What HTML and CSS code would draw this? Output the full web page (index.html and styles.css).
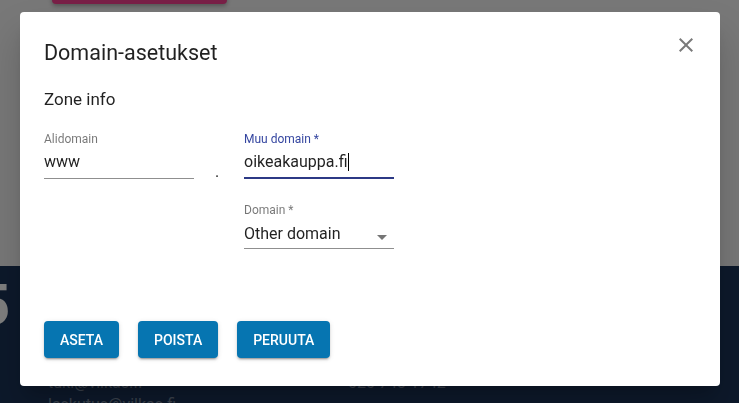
FILE: index.html
```html
<!DOCTYPE html>
<html lang="fi">
<head>
  <meta charset="UTF-8" />
  <meta name="viewport" content="width=device-width, initial-scale=1.0" />
  <title>Domain-asetukset</title>
  <link rel="stylesheet" href="styles.css">
</head>
<body>
  <div class="page">
    <div class="page-top">
      <div class="pink-button"></div>
    </div>
    <div class="footer">
      <div class="footer-logo">5</div>
      <div class="footer-cols">
        <div class="footer-col">
          <p>tuki@vilkas.fi</p>
          <p>laskutus@vilkas.fi</p>
        </div>
        <div class="footer-col">
          <p>020 743 1742</p>
        </div>
      </div>
    </div>
  </div>

  <div class="scrim"></div>

  <div class="dialog">
    <div class="dialog-header">
      <h2 class="dialog-title">Domain-asetukset</h2>
      <button class="close-btn" aria-label="Sulje">
        <svg viewBox="0 0 24 24" width="24" height="24"><path d="M19 6.41L17.59 5 12 10.59 6.41 5 5 6.41 10.59 12 5 17.59 6.41 19 12 13.41 17.59 19 19 17.59 13.41 12z"/></svg>
      </button>
    </div>

    <h3 class="section-title">Zone info</h3>

    <div class="fields">
      <div class="field-row">
        <div class="field">
          <label>Alidomain</label>
          <div class="input">www</div>
        </div>
        <div class="dot">.</div>
        <div class="field-stack">
          <div class="field focused">
            <label>Muu domain *</label>
            <div class="input">oikeakauppa.fi<span class="caret"></span></div>
          </div>
          <div class="field select">
            <label>Domain *</label>
            <div class="input">Other domain<span class="arrow"></span></div>
          </div>
        </div>
      </div>
    </div>

    <div class="actions">
      <button class="btn">Aseta</button>
      <button class="btn">Poista</button>
      <button class="btn">Peruuta</button>
    </div>
  </div>
</body>
</html>
```

FILE: styles.css
```css
body {
  margin: 0;
  font-family: Roboto, "Liberation Sans", Arial, sans-serif;
  overflow: hidden;
}
.page {
  height: 403px;
  display: flex;
  flex-direction: column;
}
.page-top {
  height: 266px;
  flex-shrink: 0;
  background: #f0f0f0;
}
.pink-button {
  margin-left: 52px;
  margin-top: -30px;
  width: 175px;
  height: 34px;
  border-radius: 4px;
  background: #f2408f;
  box-shadow: 0 2px 4px rgba(0,0,0,0.3);
}
.footer {
  flex: 1;
  background: #1b3356;
  position: relative;
  padding: 0 48px;
}
.footer-logo {
  position: absolute;
  left: -22px;
  top: 6px;
  font-size: 56px;
  font-weight: 700;
  color: #ffffff;
}
.footer-cols {
  display: flex;
  padding-top: 106px;
}
.footer-col {
  width: 300px;
}
.footer-col p {
  margin: 0;
  font-size: 16px;
  line-height: 22px;
  color: #75849a;
}
.scrim {
  position: fixed;
  inset: 0;
  background: rgba(0,0,0,0.5);
}
.dialog {
  position: absolute;
  left: 20px;
  top: 12px;
  width: 700px;
  height: 374px;
  box-sizing: border-box;
  padding: 29px 24px 0;
  background: #fff;
  border-radius: 4px;
  box-shadow: 0 11px 15px -7px rgba(0,0,0,0.2), 0 24px 38px 3px rgba(0,0,0,0.14);
  color: rgba(0,0,0,0.87);
}
.dialog-header {
  display: flex;
  justify-content: space-between;
  align-items: flex-start;
}
.dialog-title {
  margin: 0;
  font-size: 21.5px;
  font-weight: 400;
  line-height: 24px;
}
.close-btn {
  margin: -8px -2px 0 0;
  padding: 0;
  border: none;
  background: none;
  width: 24px;
  height: 24px;
  fill: #7a7a7a;
}
.section-title {
  margin: 24px 0 0;
  font-size: 17px;
  font-weight: 400;
  line-height: 20px;
}
.fields {
  margin-top: 22px;
}
.field-row {
  display: flex;
  align-items: flex-start;
}
.field {
  width: 150px;
  display: flex;
  flex-direction: column;
}
.field label {
  font-size: 12px;
  line-height: 16px;
  color: rgba(0,0,0,0.54);
}
.field .input {
  position: relative;
  font-size: 16px;
  line-height: 20px;
  padding: 5px 0 6px;
  border-bottom: 1px solid #8f8f8f;
}
.field.focused label {
  color: #3546a0;
}
.field.focused .input {
  padding-bottom: 5px;
  border-bottom: 2px solid #2c3985;
}
.caret {
  display: inline-block;
  width: 1px;
  height: 18px;
  background: #000;
  vertical-align: -4px;
}
.field-stack {
  display: flex;
  flex-direction: column;
  gap: 23px;
}
.field.select .input {
  padding: 6px 0 4px;
}
.arrow {
  position: absolute;
  right: 7px;
  top: 17px;
  width: 0;
  height: 0;
  border-left: 5px solid transparent;
  border-right: 5px solid transparent;
  border-top: 5px solid #757575;
}
.dot {
  width: 50px;
  box-sizing: border-box;
  padding: 31px 0 0 21px;
  font-size: 16px;
  line-height: 20px;
}
.actions {
  display: flex;
  gap: 19px;
  margin-top: 72px;
}
.btn {
  height: 37px;
  padding: 0 16px;
  border: none;
  border-radius: 4px;
  background: #0675b1;
  color: #fff;
  font-family: inherit;
  font-size: 14px;
  font-weight: 500;
  text-transform: uppercase;
  box-shadow: 0 3px 1px -2px rgba(0,0,0,0.2), 0 2px 2px 0 rgba(0,0,0,0.14), 0 1px 5px 0 rgba(0,0,0,0.12);
}
```
